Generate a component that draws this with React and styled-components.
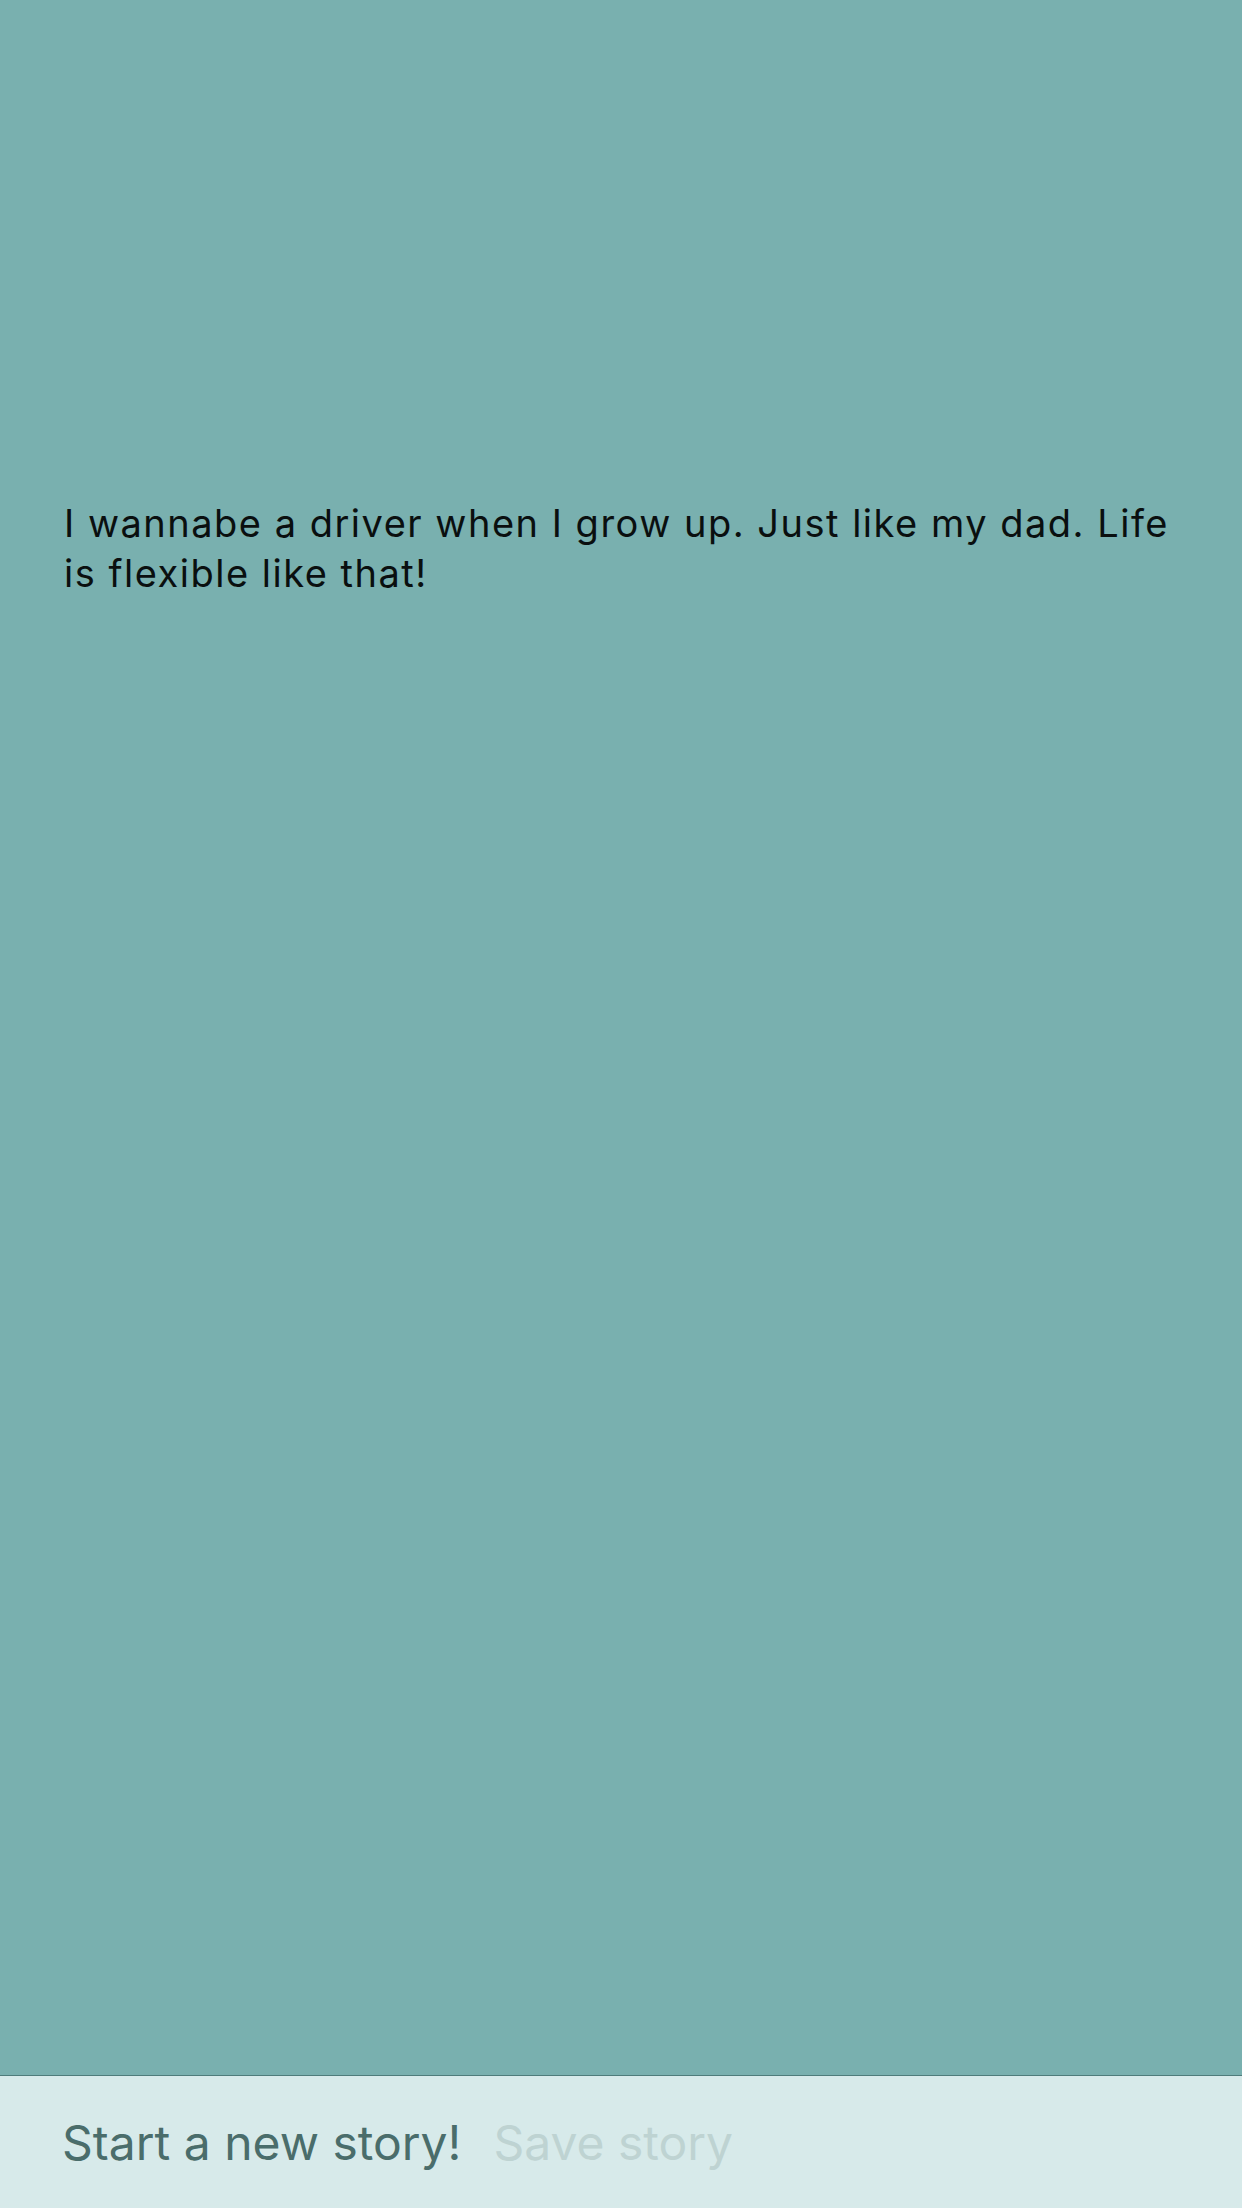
import styled, { createGlobalStyle } from "styled-components";

const GlobalStyle = createGlobalStyle`
  html, body {
    margin: 0;
    padding: 0;
  }
  body {
    font-family: Inter, "Noto Sans", sans-serif;
    background: #79b0af;
  }
`;

const App = () => {
  return (
    <Screen>
      <GlobalStyle />
      <Story>
        <p>
          I wannabe a driver when I grow up. Just like my dad. Life is flexible
          like that!
        </p>
      </Story>
      <Toolbar>
        <Action>Start a new story!</Action>
        <Action disabled>Save story</Action>
      </Toolbar>
    </Screen>
  );
};

const Screen = styled.div`
  display: flex;
  flex-direction: column;
  width: 1242px;
  height: 2208px;
  background: #79b0af;
`;

const Story = styled.main`
  flex: 1;
  padding: 498px 56px 0 64px;
  p {
    margin: 0;
    font-size: 38px;
    line-height: 50px;
    letter-spacing: 1.5px;
    color: #0a0f0f;
  }
`;

const Toolbar = styled.footer`
  display: flex;
  align-items: center;
  gap: 32px;
  height: 132px;
  padding: 0 62px;
  background: #d7eaea;
  border-top: 1px solid #4f7c7b;
`;

const Action = styled.button`
  padding: 0;
  border: none;
  background: none;
  font-family: Inter, "Noto Sans", sans-serif;
  font-size: 48px;
  color: ${(p) => (p.disabled ? "#bed3d2" : "#4a6d6b")};
`;

export default App;
